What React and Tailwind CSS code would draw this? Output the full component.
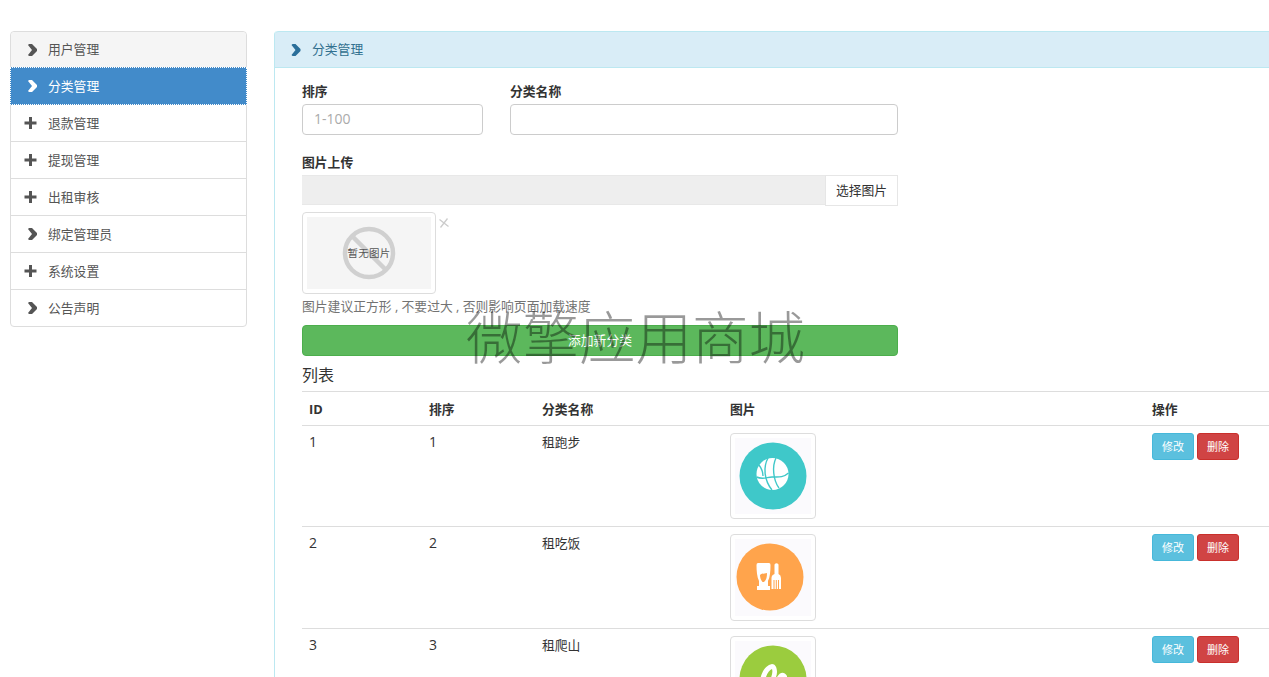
import React from "react";

const FONT = "[font-family:'Open_Sans','Noto_Sans_CJK_SC',sans-serif]";

const menu = [
  { label: "用户管理", icon: "chevron", first: true },
  { label: "分类管理", icon: "chevron", active: true },
  { label: "退款管理", icon: "plus" },
  { label: "提现管理", icon: "plus" },
  { label: "出租审核", icon: "plus" },
  { label: "绑定管理员", icon: "chevron" },
  { label: "系统设置", icon: "plus" },
  { label: "公告声明", icon: "chevron", last: true },
];

const rows = [
  { id: 1, sort: 1, name: "租跑步", icon: "ball" },
  { id: 2, sort: 2, name: "租吃饭", icon: "food" },
  { id: 3, sort: 3, name: "租爬山", icon: "leaf" },
];

const menuRowClass = (item) => {
  if (item.active) return "h-[38px] -mx-px pl-px bg-[#428bca] text-white outline outline-dotted outline-white -outline-offset-1";
  if (item.first) return "h-[35px] bg-[#f5f5f5] text-[#555] rounded-t";
  if (item.last) return "h-[36px] text-[#555]";
  return "h-[37px] border-b border-[#ddd] text-[#555]";
};

const Chevron = ({ className }) => (
  <svg viewBox="0 0 9 12" className={className} fill="none">
    <path d="M1 0 L4 0 L9 5 L9 7 L4 12 L1 12 L0 11 L4 6 L0 1 Z" fill="currentColor" />
  </svg>
);

const Plus = ({ className }) => (
  <svg viewBox="0 0 12 12" className={className}>
    <path d="M4.5 0 H7.5 V4.5 H12 V7.5 H7.5 V12 H4.5 V7.5 H0 V4.5 H4.5 Z" fill="currentColor" />
  </svg>
);

const CategoryIcon = ({ type }) => {
  if (type === "ball") {
    return (
      <svg viewBox="0 0 68 68" className="w-[68px] h-[68px]">
        <circle cx="34" cy="34" r="33.5" fill="#3fc8c9" />
        <circle cx="33.5" cy="32" r="16" fill="#fff" />
        <g fill="none" stroke="#3fc8c9" strokeWidth="1.4">
          <path d="M17.5 35 C24 38 28 35 33 35 C39 35 44 36 49.5 31" />
          <path d="M29 16 C24 25 25 38 33 48" />
          <path d="M37 16 C33 24 34 38 40 46" />
          <path d="M20 23 C23 27 24 30 24 34" />
        </g>
      </svg>
    );
  }
  if (type === "food") {
    return (
      <svg viewBox="0 0 68 68" className="w-[68px] h-[68px]">
        <circle cx="34" cy="34" r="33.5" fill="#ffa44c" />
        <path d="M22 20 H33 Q34.5 20 34.5 22 C34.5 28 34 34 32 38 V43 H34 V47 H21 V43 H23 V38 C21 34 20.5 28 20.5 22 Q20.5 20 22 20 Z" fill="#fff" />
        <path d="M24 32 C26 30 29 31 31 30 C31 34 30.5 37 28 39 H26.5 C25 37 24 35 24 32 Z" fill="#ffa44c" />
        <path d="M38.5 21.5 Q40.5 19 42.5 21.5 L42.5 31 Q45 32 45 35 V46 H43 V37 H42 V46 H40.8 V37 H39.8 V46 H38.5 V37 H37.5 V46 H35.5 V35 Q35.5 32 38.5 31 Z" fill="#fff" />
      </svg>
    );
  }
  return (
    <svg viewBox="0 0 68 68" className="w-[68px] h-[68px]">
      <circle cx="34" cy="34" r="33.5" fill="#9bcc3e" />
      <path d="M21 36 C22 27 27 20 33 19 C36 19 38 22 38 27 C38 31 36 34 35 38 H21 Z" fill="#fff" />
      <path d="M26 36 C27 30 30 25 33 24 C34 27 33 32 30 36 Z" fill="#9bcc3e" />
      <path d="M38 32 C41 27 45 26 48 31 V38 H37 Z" fill="#fff" />
    </svg>
  );
};

export default function App() {
  return (
    <div className={`relative w-[1269px] h-[677px] overflow-hidden bg-white flex items-start text-[12.8px] leading-[18px] text-[#333] ${FONT}`}>
      <aside className="ml-[10px] mt-[31px] w-[237px] shrink-0 border border-[#ddd] rounded bg-white">
        {menu.map((item) => (
          <div key={item.label} className={`flex items-center ${menuRowClass(item)}`}>
            <span className="w-[26px] flex justify-end shrink-0">
              {item.icon === "chevron" ? (
                <Chevron className={`w-[9px] h-[12px] ${item.active ? "text-white" : "text-[#555]"}`} />
              ) : (
                <Plus className="w-[13px] h-[12px] text-[#555]" />
              )}
            </span>
            <span className={`ml-[11px] ${item.first ? "pb-[2px]" : ""}`}>{item.label}</span>
          </div>
        ))}
      </aside>

      <main className="ml-[27px] mt-[31px] w-[1100px] shrink-0 border-l border-[#bce8f1] h-[700px] rounded-tl">
        <div className="h-[37px] bg-[#d9edf7] border-y border-[#bce8f1] flex items-center text-[#31708f] rounded-tl">
          <Chevron className="ml-[16px] w-[10px] h-[12px] text-[#2a6f9a]" />
          <span className="ml-[11px] pb-[2px]">分类管理</span>
        </div>

        <div className="pl-[27px] pt-[14px]">
          <div className="w-[596px]">
            <div className="flex gap-[27px]">
              <div className="w-[181px]">
                <label className="block font-bold mb-[4px]">排序</label>
                <input
                  readOnly
                  placeholder="1-100"
                  className="w-full h-[31px] px-[11px] pb-[2px] border border-[#ccc] rounded text-[14px] outline-none placeholder:text-[#aaa]"
                />
              </div>
              <div className="w-[388px]">
                <label className="block font-bold mb-[4px]">分类名称</label>
                <input readOnly className="w-full h-[31px] px-[11px] border border-[#ccc] rounded outline-none" />
              </div>
            </div>

            <label className="block font-bold mt-[18px] mb-[4px]">图片上传</label>
            <div className="flex items-start h-[31px]">
              <div className="flex-1 h-[30px] bg-[#eee] border-y border-[#e8e8e8]"></div>
              <button className="w-[73px] h-[31px] pb-[2px] border border-[#e6e6e6] bg-white text-[#333] text-center">选择图片</button>
            </div>

            <div className="flex items-start mt-[6px]">
              <div className="w-[134px] h-[82px] border border-[#ddd] rounded p-[4px] bg-white">
                <div className="relative w-full h-full bg-[#f5f5f5] flex items-center justify-center">
                  <svg viewBox="0 0 54 54" className="absolute w-[54px] h-[54px] left-[35px] top-[9px]">
                    <circle cx="27" cy="27" r="24" fill="none" stroke="#d0d0d0" strokeWidth="4.5" />
                    <path d="M10 10 L44 44" stroke="#d0d0d0" strokeWidth="4.5" />
                  </svg>
                  <span className="relative text-[10.5px] tracking-[0.2px] text-[#555]">暂无图片</span>
                </div>
              </div>
              <svg viewBox="0 0 12 12" className="ml-[2px] mt-[5px] w-[12px] h-[12px]">
                <path d="M1.5 2.5 L10.5 9.5 M9.5 1.5 L2.5 10.5" stroke="#ccc" strokeWidth="1.3" fill="none" />
              </svg>
            </div>

            <p className="mt-[3px] mb-[10px] text-[#737373]">图片建议正方形 , 不要过大 , 否则影响页面加载速度</p>

            <button className="w-full h-[31px] pb-[2px] bg-[#5cb85c] border border-[#4cae4c] rounded text-white">添加新分类</button>
          </div>

          <h3 className="mt-[8px] text-[16px] leading-[22px] text-[#333]">列表</h3>

          <table className="mt-[5px] w-[967px] table-fixed border-collapse">
            <colgroup>
              <col className="w-[120px]" />
              <col className="w-[113px]" />
              <col className="w-[188px]" />
              <col className="w-[422px]" />
              <col className="w-[124px]" />
            </colgroup>
            <thead>
              <tr className="border-t border-b border-[#ddd] h-[34px] text-left">
                <th className="px-[7px] font-bold">ID</th>
                <th className="px-[7px] font-bold">排序</th>
                <th className="px-[7px] font-bold">分类名称</th>
                <th className="px-[7px] font-bold">图片</th>
                <th className="px-[7px] font-bold">操作</th>
              </tr>
            </thead>
            <tbody>
              {rows.map((row) => (
                <tr key={row.id} className="border-b border-[#ddd] align-top">
                  <td className="px-[7px] pt-[7px] text-[14px]">{row.id}</td>
                  <td className="px-[7px] pt-[7px] text-[14px]">{row.sort}</td>
                  <td className="px-[7px] pt-[7px]">{row.name}</td>
                  <td className="px-[7px] pt-[7px] pb-[7px]">
                    <div className={`w-[86px] ${row.icon === "food" ? "h-[87px]" : "h-[86px]"} border border-[#ddd] rounded p-[4px] bg-white`}>
                      <div className="w-full h-full bg-[#fbfafd] flex items-center justify-center">
                        <span className={row.icon === "food" ? "-translate-x-[3px] -translate-y-[1px]" : ""}>
                          <CategoryIcon type={row.icon} />
                        </span>
                      </div>
                    </div>
                  </td>
                  <td className="px-[7px] pt-[7px]">
                    <div className="flex gap-[3px]">
                      <button className="w-[42px] h-[27px] bg-[#5bc0de] border border-[#46b8da] rounded-[3px] text-white text-[11px]">修改</button>
                      <button className="w-[42px] h-[27px] bg-[#d04444] border border-[#c9302c] rounded-[3px] text-white text-[11px]">删除</button>
                    </div>
                  </td>
                </tr>
              ))}
            </tbody>
          </table>
        </div>
      </main>

      {/* watermark sits over the form */}
      <div className="absolute left-[466px] top-[300px] text-[56.5px] leading-[68px] font-light text-[rgba(0,0,0,0.4)] whitespace-nowrap pointer-events-none [font-family:'Noto_Sans_CJK_SC',sans-serif]">
        微擎应用商城
      </div>
    </div>
  );
}
